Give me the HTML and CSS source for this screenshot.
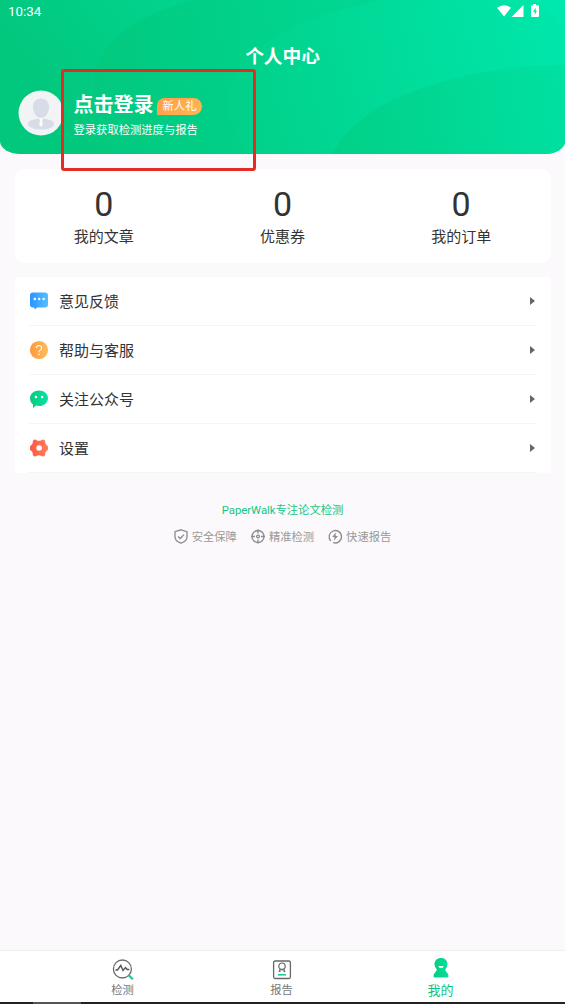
FILE: index.html
```html
<!DOCTYPE html>
<html lang="zh-CN">
<head>
<meta charset="utf-8">
<title>个人中心</title>
<link rel="stylesheet" href="styles.css">
</head>
<body>
<div class="app">
  <header class="hero">
    <svg class="hero-bg" viewBox="0 0 565 154" preserveAspectRatio="none" aria-hidden="true">
      <defs>
        <linearGradient id="base" x1="0" y1="0.2" x2="1" y2="0"><stop offset="0" stop-color="#02c87d"/><stop offset="1" stop-color="#00e9af"/></linearGradient>
        <linearGradient id="swell" gradientUnits="userSpaceOnUse" x1="94" y1="80" x2="450" y2="40"><stop offset="0" stop-color="#02c97e"/><stop offset="1" stop-color="#00db99"/></linearGradient>
        <linearGradient id="middle" gradientUnits="userSpaceOnUse" x1="229" y1="90" x2="565" y2="60"><stop offset="0" stop-color="#01d088"/><stop offset="1" stop-color="#00e6aa"/></linearGradient>
        <linearGradient id="front" gradientUnits="userSpaceOnUse" x1="333" y1="140" x2="565" y2="100"><stop offset="0" stop-color="#02d087"/><stop offset="1" stop-color="#00e0a1"/></linearGradient>
      </defs>
      <rect width="565" height="154" fill="url(#base)"/>
      <path d="M150 154C112 132 92 107 94 80C97 43 137 15 193 0H385C340 8 305 20 283 33C235 60 220 94 234 128Q240 145 252 154Z" fill="url(#swell)"/>
      <path d="M252 154Q240 145 234 128C220 94 235 60 283 33C305 20 340 8 385 0H530Q548 10 565 27V154Z" fill="url(#middle)" opacity=".7"/>
      <path d="M333 154C346 125 379 103 422 88C464 73 514 65 565 65V154Z" fill="url(#front)"/>
    </svg>
    <div class="status">
      <span>10:34</span>
      <svg width="44" height="14" viewBox="0 0 44 14" fill="#fff" aria-hidden="true">
        <path d="M0 2.800Q7-2.400 14 2.800L7 11.500Z"/><path d="M26.500 0V12H14.500Z"/>
        <path fill-rule="evenodd" d="M36-1H39V.300H41Q42 .300 42 1.300V11Q42 12 41 12H35Q34 12 34 11V1.300Q34 .300 35 .300H36ZM38.600 2.500L36 6.800H37.700V10L40 5.700H38.600Z"/>
      </svg>
    </div>
    <h1>个人中心</h1>
    <div class="profile">
      <svg class="avatar" width="46" height="46" viewBox="0 0 46 46" aria-hidden="true">
        <circle cx="23" cy="23" r="22.500" fill="#f1f3f5"/>
        <path d="M23 8.500C28 8.500 31 12 31 17C31 22 28 28 23 28S15 22 15 17C15 12 18 8.500 23 8.500Z" fill="#d8dce6"/>
        <ellipse cx="23" cy="34" rx="13" ry="5.500" fill="#d8dce6"/>
        <path d="M21 28H25L24 31L25 34.500L23 37L21 34.500L22 31Z" fill="#fbfbfc"/>
      </svg>
      <div class="login">
        <div class="login-title"><strong>点击登录</strong><span class="gift">新人礼</span></div>
        <p>登录获取检测进度与报告</p>
      </div>
    </div>
    <div class="highlight"></div>
  </header>
  <main>
    <section class="stats">
      <div><b>0</b><span>我的文章</span></div>
      <div><b>0</b><span>优惠券</span></div>
      <div><b>0</b><span>我的订单</span></div>
    </section>
    <section class="menu">
      <div class="row">
        <svg width="20" height="20" viewBox="0 0 20 20" aria-hidden="true"><defs><linearGradient id="blue"><stop stop-color="#2b93ff"/><stop offset="1" stop-color="#55c0ff"/></linearGradient></defs><path d="M4 1.500H16Q19 1.500 19 4.500V13.500Q19 16.500 16 16.500H8L6 18.500L5 16.500H4Q1 16.500 1 13.500V4.500Q1 1.500 4 1.500Z" fill="url(#blue)"/><g fill="#fff"><circle cx="5.800" cy="8" r="1.200"/><circle cx="10.200" cy="8" r="1.200"/><circle cx="14.600" cy="8" r="1.200"/></g></svg>
        <span>意见反馈</span><i></i>
      </div>
      <div class="row">
        <svg width="20" height="20" viewBox="0 0 20 20" aria-hidden="true"><defs><linearGradient id="amber"><stop stop-color="#ff983f"/><stop offset="1" stop-color="#ffbd59"/></linearGradient></defs><circle cx="10" cy="10" r="9.100" fill="url(#amber)"/><path d="M7.400 8Q7.400 5.500 10 5.500T12.700 8Q12.700 9.200 11.300 10.100Q10 11 10 12.200" fill="none" stroke="#fff" stroke-width="1.100"/><circle cx="10" cy="14.200" r=".8" fill="#fff"/></svg>
        <span>帮助与客服</span><i></i>
      </div>
      <div class="row">
        <svg width="20" height="20" viewBox="0 0 20 20" aria-hidden="true"><defs><linearGradient id="mint"><stop stop-color="#06cb7e"/><stop offset="1" stop-color="#08e3a2"/></linearGradient></defs><path d="M10 1.500C15 1.500 19 4.900 19 9.200S15 17 10 17Q8.500 17 7 16.600L4 19V15.400Q1 13.100 1 9.200C1 4.900 5 1.500 10 1.500Z" fill="url(#mint)"/><circle cx="6.900" cy="8" r="1.300" fill="#fff"/><circle cx="13.100" cy="8" r="1.300" fill="#fff"/></svg>
        <span>关注公众号</span><i></i>
      </div>
      <div class="row">
        <svg width="20" height="20" viewBox="0 0 20 20" aria-hidden="true"><defs><linearGradient id="coral"><stop stop-color="#ff5546"/><stop offset="1" stop-color="#ff8059"/></linearGradient></defs><path d="M5 1.800Q6.500 1 7.600 2.200Q10 3.500 12.400 2.200Q13.500 1 15 1.800Q16.500 2.600 16.200 4.200Q16.300 6.400 18.200 7.500Q19.400 8.500 19 10Q19.400 11.500 18.200 12.500Q16.300 13.600 16.200 15.800Q16.500 17.400 15 18.200Q13.500 19 12.400 17.800Q10 16.500 7.600 17.800Q6.500 19 5 18.200Q3.500 17.400 3.800 15.800Q3.700 13.600 1.800 12.500Q.6 11.500 1 10Q.6 8.500 1.800 7.500Q3.700 6.400 3.800 4.200Q3.500 2.600 5 1.800Z" fill="url(#coral)"/><circle cx="10.100" cy="10" r="2.800" fill="#fff"/></svg>
        <span>设置</span><i></i>
      </div>
    </section>
    <section class="about">
      <p>PaperWalk专注论文检测</p>
      <div class="benefits">
        <span><svg width="14" height="15" viewBox="0 0 14 15" aria-hidden="true"><path d="M7 .8L13 2.700V8Q13 12 7 14.200Q1 12 1 8V2.700ZM4 7.500L6.200 9.500L10 5.600"/></svg>安全保障</span>
        <span><svg width="14" height="15" viewBox="0 0 14 15" aria-hidden="true"><circle cx="7" cy="7.500" r="6"/><circle cx="7" cy="7.500" r="1.400"/><path d="M7 .5V4.500M7 10.500V14.500M0 7.500H4M10 7.500H14"/></svg>精准检测</span>
        <span><svg width="14" height="15" viewBox="0 0 14 15" aria-hidden="true"><path d="M2.800 12A6.200 6.200 0 1 1 5 13.500"/><path class="bolt" d="M7.800 3.500L4.200 8H6.500L6 11.600L10 6.900H7.600Z"/></svg>快速报告</span>
      </div>
    </section>
  </main>
  <nav>
    <div class="tab">
      <svg width="22" height="22" viewBox="0 0 22 22" fill="none" aria-hidden="true"><circle cx="10.400" cy="11" r="9" stroke="#6c6c6c" stroke-width="1.300"/><path d="M3.500 12H5.500L8.800 7.500L11 12.500L13.500 9.500L15.200 11.500H17.300" stroke="#555" stroke-width="1.400"/><path d="M16.700 17.300L20.800 21.300" stroke="#10c98b" stroke-width="2.200"/></svg>
      <span>检测</span>
    </div>
    <div class="tab">
      <svg width="22" height="22" viewBox="0 0 22 22" fill="none" aria-hidden="true"><rect x="2.600" y="3" width="16.800" height="17.500" rx="1.500" stroke="#686868" stroke-width="1.300"/><circle cx="11" cy="8.200" r="3.200" stroke="#666" stroke-width="1.200"/><path d="M9.300 10.800L8 13.800L10.400 12.500M12.700 10.800L14 13.800L11.600 12.500" stroke="#666"/><path d="M7 16.800H15" stroke="#10c98b" stroke-width="1.500"/></svg>
      <span>报告</span>
    </div>
    <div class="tab active">
      <svg width="22" height="22" viewBox="0 0 22 22" aria-hidden="true"><defs><linearGradient id="person"><stop stop-color="#06cc81"/><stop offset="1" stop-color="#06dda0"/></linearGradient></defs><path d="M11 0C15 0 17.500 2.700 17.500 6.300Q17.500 9 15.200 11.500Q15.500 13.300 17.300 15Q18.500 16.500 18.500 18Q18.500 19.500 17 19.500H5Q3.500 19.500 3.500 18Q3.500 16.500 4.700 15Q6.500 13.300 6.800 11.500Q4.500 9 4.500 6.300C4.500 2.700 7 0 11 0Z" fill="url(#person)"/><path d="M8.300 8H13.700Q13.300 10.300 11 10.300T8.300 8Z" fill="#d9ffef"/></svg>
      <span>我的</span>
    </div>
  </nav>
  <div class="device-edge"></div>
</div>
</body>
</html>
```
FILE: styles.css
```css
* { box-sizing: border-box; }
body { margin: 0; background: #fbf9fb; color: #333; font-family: Roboto, "Noto Sans CJK SC", sans-serif; }
p, h1 { margin: 0; }
svg { display: block; flex: none; overflow: visible; }
.app { display: flex; flex-direction: column; height: 1004px; }
.hero { position: relative; height: 154px; color: #fff; flex: none; }
.hero-bg { position: absolute; inset: 0; width: 100%; height: 100%; border-radius: 0 0 20px 20px / 0 0 13px 13px; z-index: -1; overflow: hidden; }
.status { height: 24px; padding: 5px 24px 0 8px; display: flex; justify-content: space-between; font-size: 13.3px; line-height: 14px; font-weight: 400; }
h1 { margin-top: 19px; text-align: center; font-size: 18.7px; line-height: 28px; font-weight: 700; }
.profile { display: flex; padding: 19px 0 0 18px; }
.login { padding: 2px 0 0 9.5px; }
.login-title { display: flex; height: 26px; align-items: center; gap: 3.5px; }
.login-title strong { font-size: 20px; line-height: 26px; font-weight: 700; }
.gift { width: 45px; height: 17px; margin-top: 2px; border-radius: 8px 9px 9px 0; background: linear-gradient(135deg, #ff9c45, #ffb957); font-size: 11.3px; line-height: 17px; text-align: center; }
.login p { margin-top: 4px; font-size: 11.3px; line-height: 17px; }
.highlight { position: absolute; left: 60.5px; top: 69px; width: 195px; height: 102px; border: 3px solid #e52c24; border-radius: 3px; z-index: 1; }
main { flex: 1; padding: 15px 14.5px 0; }
.stats { display: grid; grid-template-columns: repeat(3, 1fr); height: 94px; background: #fff; border-radius: 9px; padding-top: 15px; }
.stats div { display: flex; flex-direction: column; align-items: center; }
.stats b { font-size: 34px; line-height: 40px; font-weight: 400; }
.stats span { font-size: 15px; line-height: 22px; margin-top: 2px; }
.menu { margin-top: 14px; padding: 0 14px; background: #fff; border-radius: 3px; }
.row { display: flex; align-items: center; height: 49px; border-bottom: 1px solid #f5f5f5; font-size: 15px; }
.row span { margin: 2px 0 0 10.5px; line-height: 22px; }
.row i { margin: 0 2px 0 auto; border-left: 5.5px solid #666; border-top: 4.5px solid transparent; border-bottom: 4.5px solid transparent; }
.about { padding-top: 29px; text-align: center; }
.about p { color: #16c584; font-size: 11.3px; line-height: 18px; }
.benefits { display: flex; justify-content: center; gap: 14px; margin-top: 9px; font-size: 11.3px; line-height: 18px; color: #999; }
.benefits span { display: flex; align-items: center; gap: 4px; }
.benefits svg { fill: none; stroke: #8c8c8c; stroke-width: 1.3; margin-top: -3px; }
.benefits .bolt { fill: #8c8c8c; stroke: none; }
nav { display: grid; grid-template-columns: repeat(3, 159px); justify-content: center; height: 52px; flex: none; background: #fff; border-top: 1px solid #f1f0f1; padding-right: 2px; }
.tab { display: flex; flex-direction: column; align-items: center; padding-top: 7px; font-size: 11.3px; line-height: 18px; color: #777; }
.tab span { margin-top: 2px; }
.active { color: #0bc47f; font-size: 13px; }
.device-edge { height: 2px; flex: none; background: linear-gradient(90deg, #222 33px, #555 33px, #555 81px, #222 81px); }
```
